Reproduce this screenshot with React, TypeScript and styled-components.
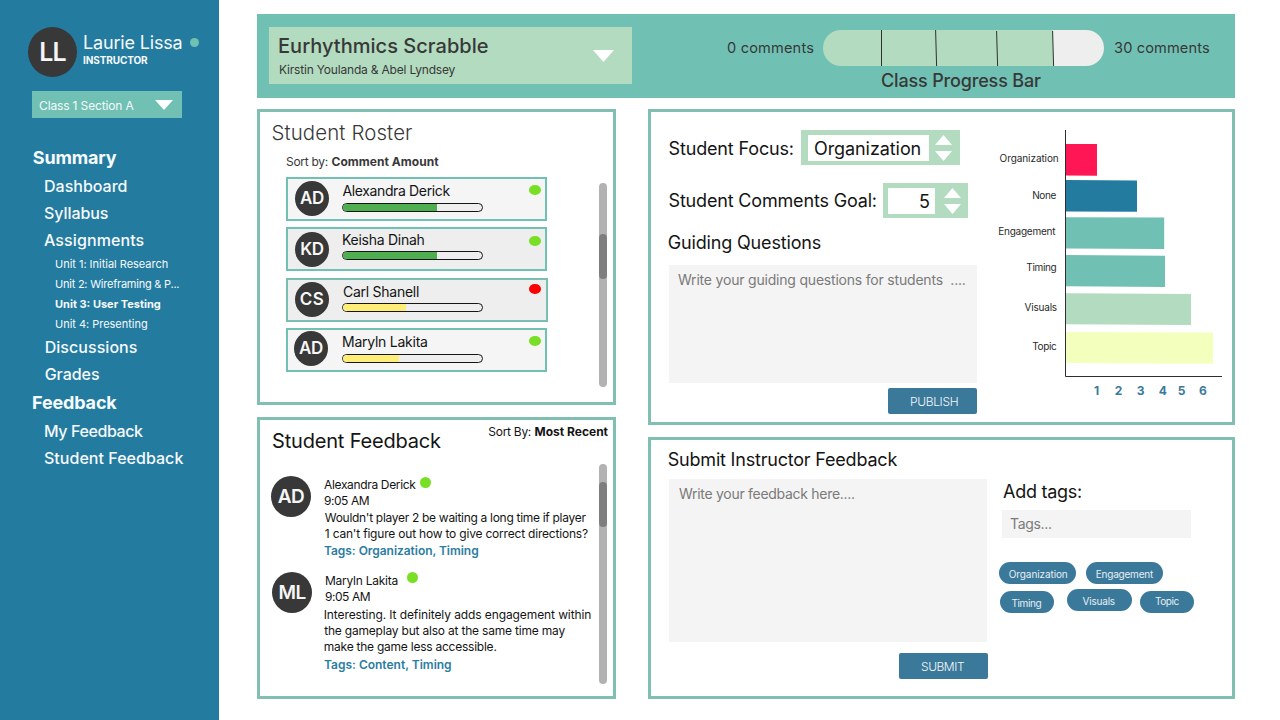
import React from "react";
import styled, { createGlobalStyle } from "styled-components";

const c = {
  blue: "#247ba0",
  button: "#3b799b",
  teal: "#70c1b3",
  frame: "#81bfb3",
  mint: "#b2dbbf",
  ink: "#383838",
  field: "#f4f4f4",
  hint: "#7a7a7a",
  online: "#79df25",
  offline: "#ff0000",
};

const GlobalStyle = createGlobalStyle`
  * { box-sizing: border-box; }
  body { margin: 0; background: #fff; }
`;

/* ---------- shared ---------- */

const Page = styled.div`
  display: flex;
  width: 1280px;
  height: 720px;
  overflow: hidden;
  font-family: Inter, sans-serif;
  color: #141414;
  white-space: pre;
`;

const Label = styled.div<{ $size?: number; $weight?: number; $track?: number; $line?: number }>`
  font-size: ${(p) => p.$size ?? 18}px;
  font-weight: ${(p) => p.$weight ?? 400};
  letter-spacing: ${(p) => p.$track ?? 0}px;
  line-height: ${(p) => p.$line ?? 20}px;
`;

const Dot = styled.span<{ $w: number; $h: number; $color: string }>`
  flex: none;
  width: ${(p) => p.$w}px;
  height: ${(p) => p.$h}px;
  border-radius: 50%;
  background: ${(p) => p.$color};
`;

const Avatar = styled.div<{ $w: number; $h: number; $size: number; $track: number }>`
  flex: none;
  width: ${(p) => p.$w}px;
  height: ${(p) => p.$h}px;
  border-radius: 50%;
  background: ${c.ink};
  color: #f6f6f6;
  font-size: ${(p) => p.$size}px;
  font-weight: 600;
  letter-spacing: ${(p) => p.$track}px;
  line-height: ${(p) => p.$h}px;
  text-align: center;
`;

const Triangle = styled.svg<{ $top?: number }>`
  display: block;
  flex: none;
  margin-top: ${(p) => p.$top ?? 0}px;
  fill: #fff;
`;

function Caret({ w, h, up, top }: { w: number; h: number; up?: boolean; top?: number }) {
  return (
    <Triangle width={w} height={h} $top={top}>
      <polygon points={up ? `0,${h} ${w},${h} ${w / 2},0` : `0,0 ${w},0 ${w / 2},${h}`} />
    </Triangle>
  );
}

const Panel = styled.section<{ $h: number }>`
  display: flex;
  height: ${(p) => p.$h}px;
  border: 3px solid ${c.frame};
  background: #fff;
`;

const ScrollTrack = styled.div<{ $h: number; $top: number; $offset: number }>`
  flex: none;
  width: 8px;
  height: ${(p) => p.$h}px;
  margin-top: ${(p) => p.$top}px;
  padding-top: ${(p) => p.$offset}px;
  border-radius: 4px;
  background: #b2b2b2;
`;

const ScrollThumb = styled.div`
  height: 45px;
  border-radius: 4px;
  background: #7e7e7e;
`;

const ActionButton = styled.div<{ $track: number }>`
  width: 89px;
  height: 26px;
  padding-left: 22px;
  border-radius: 2px;
  background: ${c.button};
  color: #f3f7f9;
  font-size: 12px;
  font-weight: 300;
  letter-spacing: ${(p) => p.$track}px;
  line-height: 27px;
`;

const TextArea = styled.div<{ $w: number; $h: number; $pad: number }>`
  width: ${(p) => p.$w}px;
  height: ${(p) => p.$h}px;
  padding: 5px ${(p) => p.$pad}px;
  background: ${c.field};
  color: ${c.hint};
`;

/* ---------- sidebar ---------- */

const Sidebar = styled.aside`
  flex: none;
  width: 219px;
  height: 720px;
  padding: 27px 0 0 28px;
  background: ${c.blue};
  color: #f6fafc;
`;

const Profile = styled.div`
  display: flex;
  height: 64px;
`;

const ProfileText = styled.div`
  width: 108px;
  padding: 5px 0 0 6px;
`;

const StatusSlot = styled.div`
  display: flex;
  padding: 11px 0 0 5px;
`;

const ClassSelect = styled.div`
  display: flex;
  width: 150px;
  height: 27px;
  margin: 0 0 25px 4px;
  padding: 5px 9px 0 7px;
  justify-content: space-between;
  background: ${c.teal};
`;

const NavItem = styled.div<{ $level: 1 | 2 | 3; $bold?: boolean; $track: number; $shift?: number }>`
  height: ${(p) => [30, 27, 20][p.$level - 1]}px;
  line-height: ${(p) => [30, 27, 20][p.$level - 1]}px;
  padding-left: ${(p) => [5, 16, 27][p.$level - 1] + (p.$shift ?? 0)}px;
  font-size: ${(p) => [18, 16, 11][p.$level - 1]}px;
  font-weight: ${(p) => (p.$level === 1 || p.$bold ? 700 : p.$level === 2 ? 500 : 400)};
  letter-spacing: ${(p) => p.$track}px;
`;

type Nav = { text: string; level: 1 | 2 | 3; track: number; bold?: boolean; shift?: number };
const nav: Nav[] = [
  { text: "Summary", level: 1, track: -0.15, shift: -0.2 },
  { text: "Dashboard", level: 2, track: 0 },
  { text: "Syllabus", level: 2, track: -0.06 },
  { text: "Assignments", level: 2, track: 0.09 },
  { text: "Unit 1: Initial Research", level: 3, track: -0.02 },
  { text: "Unit 2: Wireframing & P...", level: 3, track: -0.23 },
  { text: "Unit 3: User Testing", level: 3, track: 0, bold: true },
  { text: "Unit 4: Presenting", level: 3, track: -0.02 },
  { text: "Discussions", level: 2, track: 0.05, shift: 0.7 },
  { text: "Grades", level: 2, track: -0.03, shift: 0.7 },
  { text: "Feedback", level: 1, track: -0.15, shift: -1 },
  { text: "My Feedback", level: 2, track: -0.4 },
  { text: "Student Feedback", level: 2, track: 0.03 },
];

/* ---------- header ---------- */

const Main = styled.main`
  padding: 14px 0 0 38px;
`;

const Header = styled.header`
  display: flex;
  width: 978px;
  height: 84px;
  margin-bottom: 11px;
  background: ${c.teal};
  color: ${c.ink};
`;

const ProjectSelect = styled.div`
  display: flex;
  justify-content: space-between;
  width: 363px;
  height: 57px;
  margin: 13px 0 0 12px;
  padding: 8px 18.5px 0 9px;
  background: ${c.mint};
`;

const Team = styled(Label)`
  margin-top: 5px;
  padding-left: 1px;
`;

const Progress = styled.div`
  display: flex;
  padding: 16px 0 0 95px;
`;

const EndLabel = styled(Label)<{ $w: number }>`
  width: ${(p) => p.$w}px;
  padding-top: 8px;
`;

const ProgressCenter = styled.div`
  width: 281px;
  margin-right: 10px;
`;

const ProgressTrack = styled.div`
  position: relative;
  width: 281px;
  height: 36px;
  border-radius: 18px;
  overflow: hidden;
  background: linear-gradient(to right, ${c.mint} 230px, #eeeeee 230px);
`;

const Dividers = styled.svg`
  position: absolute;
  inset: 0;
  stroke: #2c3330;
  stroke-width: 1;
`;

const Caption = styled(Label)`
  margin-top: 5px;
  padding-left: 58px;
`;

/* ---------- roster ---------- */

const Columns = styled.div`
  display: flex;
  gap: 32px;
`;

const Column = styled.div<{ $w: number }>`
  display: flex;
  flex-direction: column;
  gap: 12px;
  width: ${(p) => p.$w}px;
`;

const RosterBody = styled.div`
  width: 339px;
  padding: 10px 0 0 26px;
  color: ${c.ink};
`;

const RosterTitle = styled(Label)`
  margin-left: -14.5px;
`;

const SortLine = styled.div`
  display: flex;
  gap: 3.5px;
  margin: 8px 0 5px;
`;

const RosterCard = styled.div<{ $w: number; $shade: string; $gap: number; $edge: string }>`
  display: flex;
  width: ${(p) => p.$w}px;
  height: 44px;
  margin-bottom: ${(p) => p.$gap}px;
  border: 2px solid ${(p) => p.$edge};
  background: ${(p) => p.$shade};
  color: #141414;
`;

const AvatarSlot = styled.div<{ $left: number; $top: number }>`
  width: 54px;
  padding: ${(p) => p.$top}px 0 0 ${(p) => p.$left}px;
`;

const StudentInfo = styled.div<{ $top: number }>`
  width: 187px;
  padding-top: ${(p) => p.$top}px;
`;

const StudentName = styled(Label)<{ $shift: number }>`
  margin-left: ${(p) => p.$shift}px;
`;

const Meter = styled.div<{ $gap: number }>`
  width: 141px;
  height: 9px;
  margin-top: ${(p) => p.$gap}px;
  border: 1px solid #161616;
  border-radius: 4.5px;
  overflow: hidden;
  background: #eeeeee;
`;

const MeterFill = styled.div<{ $w: number; $color: string }>`
  width: ${(p) => p.$w}px;
  height: 100%;
  background: ${(p) => p.$color};
`;

const DotSlot = styled.div<{ $top: number; $left?: number }>`
  display: flex;
  padding: ${(p) => p.$top}px 0 0 ${(p) => p.$left ?? 0}px;
`;

const green = "#4eae50";
const yellow = "#feee77";
const roster = [
  { id: "AD", name: "Alexandra Derick", track: -0.36, at: -0.3, shift: 0.4, w: 261, shade: "#f5f5f5", edge: c.teal, gap: 6, ax: 7, ay: 2, ny: 2, mg: 2, fill: 94, color: green, dx: -0.4, dy: 6, dot: c.online },
  { id: "KD", name: "Keisha Dinah", track: -0.27, at: -0.3, shift: 0, w: 261, shade: "#eeeeee", edge: c.teal, gap: 7, ax: 7, ay: 3, ny: 1, mg: 1, fill: 94, color: green, dx: -0.4, dy: 7, dot: c.online },
  { id: "CS", name: "Carl Shanell", track: -0.26, at: 0.4, shift: 1, w: 262, shade: "#eeeeee", edge: "#78bfb2", gap: 6, ax: 7, ay: 2, ny: 2, mg: 1, fill: 63, color: yellow, dx: 0.6, dy: 4, dot: c.offline },
  { id: "AD", name: "Maryln Lakita", track: -0.25, at: -0.3, shift: 0, w: 261, shade: "#f5f5f5", edge: c.teal, gap: 0, ax: 6, ay: 1, ny: 2, mg: 2, fill: 56, color: yellow, dx: -0.4, dy: 6, dot: c.online },
];

/* ---------- student feedback ---------- */

const FeedbackBody = styled.div`
  width: 339px;
  padding-top: 2px;
`;

const FeedbackHead = styled.div`
  display: flex;
  width: 353px;
  height: 54px;
  padding-left: 12px;
  justify-content: space-between;
`;

const FeedbackTitle = styled(Label)`
  padding-top: 9px;
`;

const FeedbackSort = styled.div`
  display: flex;
  gap: 3.5px;
  padding-right: 5px;
`;

const Entry = styled.article<{ $h: number; $left: number }>`
  display: flex;
  gap: 13px;
  height: ${(p) => p.$h}px;
  padding-left: ${(p) => p.$left}px;
`;

const EntryHead = styled.div<{ $gap: number }>`
  display: flex;
  height: 16px;
  gap: ${(p) => p.$gap}px;
`;

const EntryLine = styled(Label)<{ $shift?: number; $gap?: number }>`
  margin: ${(p) => p.$gap ?? 0}px 0 0 ${(p) => p.$shift ?? 0}px;
`;

const TagLine = styled(EntryLine)`
  color: #2b7da1;
`;

/* ---------- settings + chart ---------- */

const Settings = styled.div`
  width: 326px;
  padding: 18px 0 0 18px;
`;

const SettingRow = styled.div<{ $below: number }>`
  display: flex;
  align-items: center;
  height: 35px;
  margin-bottom: ${(p) => p.$below}px;
`;

const SettingLabel = styled(Label)<{ $w: number; $drop: number }>`
  width: ${(p) => p.$w}px;
  margin-left: -0.5px;
  margin-right: 0.5px;
  padding-top: ${(p) => p.$drop}px;
`;

const Stepper = styled.div<{ $w: number; $pad: number; $right: number }>`
  display: flex;
  width: ${(p) => p.$w}px;
  height: 35px;
  padding: 5px ${(p) => p.$right}px 0 ${(p) => p.$pad}px;
  justify-content: space-between;
  background: ${c.mint};
`;

const StepperValue = styled.div<{ $w: number; $pad: number; $track: number }>`
  width: ${(p) => p.$w}px;
  height: 26px;
  padding-left: ${(p) => p.$pad}px;
  background: #fff;
  font-size: 18px;
  letter-spacing: ${(p) => p.$track}px;
  line-height: 27px;
`;

const SectionTitle = styled(Label)<{ $below: number }>`
  margin: 0 0 ${(p) => p.$below}px -1.3px;
`;

const ButtonRow = styled.div<{ $top: number; $w: number }>`
  display: flex;
  justify-content: flex-end;
  width: ${(p) => p.$w}px;
  margin-top: ${(p) => p.$top}px;
`;

const Chart = styled.svg`
  display: block;
  margin-top: 8px;
  font-family: Inter, sans-serif;
`;

const bars = [
  { name: "Organization", x: 22.6, y: 42.4, track: -0.08, color: "#ff1654", pts: "89,24 120,24 120,55.7 89,55.5" },
  { name: "None", x: 55.2, y: 79.4, track: -0.4, color: "#247ba0", pts: "89,60 160,60.5 160,91.7 89,91.5" },
  { name: "Engagement", x: 21.2, y: 115.2, track: -0.23, color: "#70c1b3", pts: "89,97.2 187.2,97.5 187.2,129 89,128.5" },
  { name: "Timing", x: 49.3, y: 151.2, track: -0.35, color: "#70c1b3", pts: "89,135 188,135.7 188,167 89,166.2" },
  { name: "Visuals", x: 47.5, y: 191.2, track: -0.2, color: "#b2dbbf", pts: "89,173.2 214,174 214,205 89,204.3" },
  { name: "Topic", x: 55.3, y: 230.2, track: -0.4, color: "#f3ffbd", pts: "89,212 236,212.5 236,243.8 89,243" },
];
const ticks = [119.7, 141.5, 163.5, 185.8, 204.5, 226];

/* ---------- instructor feedback ---------- */

const Submit = styled.div`
  width: 348px;
  padding: 10px 0 0 18px;
`;

const TagColumn = styled.div`
  padding-top: 42px;
`;

const TagTitle = styled(Label)`
  padding-left: 4px;
`;

const TagInput = styled.div`
  width: 189px;
  height: 28px;
  margin: 8px 0 24px 3px;
  padding: 4px 8px;
  background: ${c.field};
  color: ${c.hint};
`;

const PillRow = styled.div<{ $h: number; $left: number }>`
  display: flex;
  align-items: flex-start;
  height: ${(p) => p.$h}px;
  padding-left: ${(p) => p.$left}px;
`;

const Pill = styled.div<{ $w: number; $pad: number; $right: number; $top?: number; $line?: number; $track: number }>`
  width: ${(p) => p.$w}px;
  height: 22px;
  margin: ${(p) => p.$top ?? 0}px ${(p) => p.$right}px 0 0;
  padding-left: ${(p) => p.$pad}px;
  border-radius: 11px;
  background: ${c.button};
  color: #e6eff3;
  font-size: 10px;
  letter-spacing: ${(p) => p.$track}px;
  line-height: ${(p) => p.$line ?? 25}px;
`;

export default function App() {
  return (
    <Page>
      <GlobalStyle />
      <Sidebar>
        <Profile>
          <Avatar $w={49} $h={50} $size={25} $track={-1}>LL</Avatar>
          <ProfileText>
            <Label $size={18} $track={-0.17} $line={22}>Laurie Lissa</Label>
            <Label $size={10} $weight={700} $track={-0.1} $line={13}>INSTRUCTOR</Label>
          </ProfileText>
          <StatusSlot><Dot $w={9} $h={9} $color={c.teal} /></StatusSlot>
        </Profile>
        <ClassSelect>
          <Label $size={12} $track={-0.14}>Class 1 Section A</Label>
          <Caret w={18} h={10} top={4} />
        </ClassSelect>
        <nav>
          {nav.map((n) => (
            <NavItem key={n.text} $level={n.level} $track={n.track} $bold={n.bold} $shift={n.shift}>{n.text}</NavItem>
          ))}
        </nav>
      </Sidebar>

      <Main>
        <Header>
          <ProjectSelect>
            <div>
              <Label $size={20} $weight={500} $track={0.03} $line={22}>Eurhythmics Scrabble</Label>
              <Team $size={12} $track={-0.19} $line={16}>Kirstin Youlanda &amp; Abel Lyndsey</Team>
            </div>
            <Caret w={21} h={12} top={15} />
          </ProjectSelect>
          <Progress>
            <EndLabel $size={14.6} $track={0.16} $w={96}>0 comments</EndLabel>
            <ProgressCenter>
              <ProgressTrack>
                <Dividers width="281" height="36">
                  <line x1="58.5" y1="0" x2="58.5" y2="36" />
                  <line x1="112.6" y1="0" x2="113.6" y2="36" />
                  <line x1="173.6" y1="1" x2="174.6" y2="36" />
                  <line x1="229.6" y1="1" x2="230.6" y2="36" />
                </Dividers>
              </ProgressTrack>
              <Caption $size={18} $weight={500} $track={-0.16}>Class Progress Bar</Caption>
            </ProgressCenter>
            <EndLabel $size={14.6} $track={0.12} $w={100}>30 comments</EndLabel>
          </Progress>
        </Header>

        <Columns>
          <Column $w={359}>
            <Panel $h={296}>
              <RosterBody>
                <RosterTitle $size={20.4} $weight={300} $track={0.13} $line={22}>Student Roster</RosterTitle>
                <SortLine>
                  <Label $size={12} $track={-0.28}>Sort by:</Label>
                  <Label $size={12} $weight={700} $track={0.04}>Comment Amount</Label>
                </SortLine>
                {roster.map((s) => (
                  <RosterCard key={s.name} $w={s.w} $shade={s.shade} $gap={s.gap} $edge={s.edge}>
                    <AvatarSlot $left={s.ax} $top={s.ay}>
                      <Avatar $w={34} $h={35} $size={17} $track={s.at}>{s.id}</Avatar>
                    </AvatarSlot>
                    <StudentInfo $top={s.ny}>
                      <StudentName $size={14} $track={s.track} $shift={s.shift}>{s.name}</StudentName>
                      <Meter $gap={s.mg}><MeterFill $w={s.fill} $color={s.color} /></Meter>
                    </StudentInfo>
                    <DotSlot $top={s.dy - 0.3}><Dot $w={11.5} $h={10} $color={s.dot} /></DotSlot>
                  </RosterCard>
                ))}
              </RosterBody>
              <ScrollTrack $h={204} $top={71} $offset={51}><ScrollThumb /></ScrollTrack>
            </Panel>

            <Panel $h={282}>
              <FeedbackBody>
                <FeedbackHead>
                  <FeedbackTitle $size={20} $track={-0.18}>Student Feedback</FeedbackTitle>
                  <FeedbackSort>
                    <Label $size={12} $track={-0.28}>Sort By:</Label>
                    <Label $size={12} $weight={700}>Most Recent</Label>
                  </FeedbackSort>
                </FeedbackHead>
                <Entry $h={96} $left={11}>
                  <Avatar $w={40} $h={41} $size={19} $track={-0.6}>AD</Avatar>
                  <div>
                    <EntryHead $gap={4.5}>
                      <Label $size={12} $track={-0.34} $line={17}>Alexandra Derick</Label>
                      <DotSlot $top={0.7}><Dot $w={11} $h={11} $color={c.online} /></DotSlot>
                    </EntryHead>
                    <EntryLine $size={12} $track={-0.45} $line={17}>9:05 AM</EntryLine>
                    <EntryLine $size={12} $track={-0.3} $line={16} $gap={1} $shift={0.8}>Wouldn't player 2 be waiting a long time if player</EntryLine>
                    <EntryLine $size={12} $track={-0.2} $line={16} $shift={0.8}>1 can't figure out how to give correct directions?</EntryLine>
                    <TagLine $size={12} $weight={600} $track={-0.04} $line={18}>Tags: Organization, Timing</TagLine>
                  </div>
                </Entry>
                <Entry $h={112} $left={12}>
                  <Avatar $w={40} $h={41} $size={19} $track={-0.6}>ML</Avatar>
                  <div>
                    <EntryHead $gap={9.5}>
                      <Label $size={12} $track={-0.25} $line={17}>Maryln Lakita</Label>
                      <DotSlot $top={0}><Dot $w={11} $h={11} $color={c.online} /></DotSlot>
                    </EntryHead>
                    <EntryLine $size={12} $track={-0.45} $line={17}>9:05 AM</EntryLine>
                    <EntryLine $size={12} $track={-0.1} $line={16} $gap={2} $shift={-1.3}>Interesting. It definitely adds engagement within</EntryLine>
                    <EntryLine $size={12} $track={-0.2} $line={16} $shift={-0.8}>the gameplay but also at the same time may</EntryLine>
                    <EntryLine $size={12} $track={-0.24} $line={16} $shift={-1.2}>make the game less accessible.</EntryLine>
                    <TagLine $size={12} $weight={600} $line={20} $shift={-1}>Tags: Content, Timing</TagLine>
                  </div>
                </Entry>
              </FeedbackBody>
              <ScrollTrack $h={220} $top={44} $offset={18}><ScrollThumb /></ScrollTrack>
            </Panel>
          </Column>

          <Column $w={587}>
            <Panel $h={316}>
              <Settings>
                <SettingRow $below={18}>
                  <SettingLabel $track={-0.15} $w={132} $drop={2}>Student Focus:</SettingLabel>
                  <Stepper $w={159} $pad={7} $right={8}>
                    <StepperValue $w={121} $pad={6} $track={-0.08}>Organization</StepperValue>
                    <div>
                      <Caret w={17} h={10} up />
                      <Caret w={17} h={10} top={6} />
                    </div>
                  </Stepper>
                </SettingRow>
                <SettingRow $below={15}>
                  <SettingLabel $track={-0.17} $w={214} $drop={1}>Student Comments Goal:</SettingLabel>
                  <Stepper $w={85} $pad={5} $right={7}>
                    <StepperValue $w={47} $pad={31} $track={0}>5</StepperValue>
                    <div>
                      <Caret w={17} h={10} up />
                      <Caret w={17} h={10} top={6} />
                    </div>
                  </Stepper>
                </SettingRow>
                <SectionTitle $track={-0.16} $below={12}>Guiding Questions</SectionTitle>
                <TextArea $w={308} $h={118} $pad={9}>
                  <Label $size={14} $track={-0.2}>Write your guiding questions for students  ....</Label>
                </TextArea>
                <ButtonRow $top={5} $w={308}>
                  <ActionButton $track={-0.33}>PUBLISH</ActionButton>
                </ButtonRow>
              </Settings>
              <Chart width="250" height="290">
                {bars.map((b) => (
                  <g key={b.name}>
                    <polygon points={b.pts} fill={b.color} />
                    <text x={b.x} y={b.y} fontSize="10" letterSpacing={b.track} fill="#2a2a2a">{b.name}</text>
                  </g>
                ))}
                <path d="M88.5 10V256.5H245" fill="none" stroke="#2e2e2e" strokeWidth="1" />
                {ticks.map((x, i) => (
                  <text key={x} x={x} y="275" textAnchor="middle" fontSize="12" fontWeight="700" fill={c.button}>{i + 1}</text>
                ))}
              </Chart>
            </Panel>

            <Panel $h={262}>
              <Submit>
                <SectionTitle $track={-0.2} $below={9}>Submit Instructor Feedback</SectionTitle>
                <TextArea $w={318} $h={163} $pad={10}>
                  <Label $size={14} $track={-0.29}>Write your feedback here....</Label>
                </TextArea>
                <ButtonRow $top={11} $w={319}>
                  <ActionButton $track={-0.45}>SUBMIT</ActionButton>
                </ButtonRow>
              </Submit>
              <TagColumn>
                <TagTitle $track={-0.27}>Add tags:</TagTitle>
                <TagInput><Label $size={14} $track={-0.32}>Tags...</Label></TagInput>
                <PillRow $h={27} $left={0}>
                  <Pill $w={77} $pad={9.8} $right={10} $track={-0.1}>Organization</Pill>
                  <Pill $w={77} $pad={9.8} $right={0} $track={-0.22}>Engagement</Pill>
                </PillRow>
                <PillRow $h={24} $left={1}>
                  <Pill $w={54} $pad={11.5} $right={13} $top={2} $track={-0.38}>Timing</Pill>
                  <Pill $w={65} $pad={15.5} $right={8} $track={-0.2}>Visuals</Pill>
                  <Pill $w={54} $pad={15} $right={0} $top={2} $line={21} $track={-0.4}>Topic</Pill>
                </PillRow>
              </TagColumn>
            </Panel>
          </Column>
        </Columns>
      </Main>
    </Page>
  );
}
